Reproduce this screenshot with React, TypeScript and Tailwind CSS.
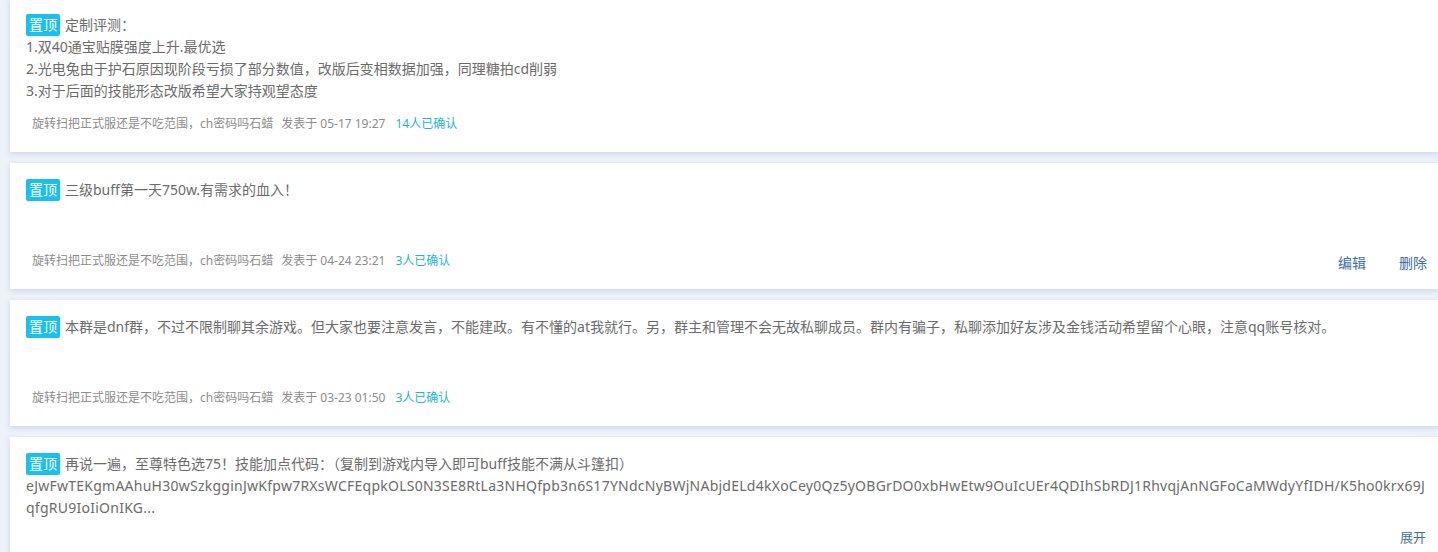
import { ReactNode } from 'react'

interface Notice {
  lines: ReactNode[]
  time: string
  confirmed: number
  canEdit?: boolean
  collapsed?: boolean
}

const author = '旋转扫把正式服还是不吃范围，ch密码吗石蜡'

const notices: Notice[] = [
  {
    lines: [
      '定制评测：',
      '1.双40通宝贴膜强度上升.最优选',
      '2.光电兔由于护石原因现阶段亏损了部分数值，改版后变相数据加强，同理糖拍cd削弱',
      '3.对于后面的技能形态改版希望大家持观望态度',
    ],
    time: '05-17 19:27',
    confirmed: 14,
  },
  {
    lines: ['三级buff第一天750w.有需求的血入！'],
    time: '04-24 23:21',
    confirmed: 3,
    canEdit: true,
  },
  {
    lines: [
      '本群是dnf群，不过不限制聊其余游戏。但大家也要注意发言，不能建政。有不懂的at我就行。另，群主和管理不会无故私聊成员。群内有骗子，私聊添加好友涉及金钱活动希望留个心眼，注意qq账号核对。',
    ],
    time: '03-23 01:50',
    confirmed: 3,
  },
  {
    lines: [
      '再说一遍，至尊特色选75！技能加点代码：（复制到游戏内导入即可buff技能不满从斗篷扣）',
      <span className="tracking-[0.25px]">
        eJwFwTEKgmAAhuH30wSzkgginJwKfpw7RXsWCFEqpkOLS0N3SE8RtLa3NHQfpb3n6S17YNdcNyBWjNAbjdELd4kXoCey0Qz5yOBGrDO0xbHwEtw9OuIcUEr4QDIhSbRDJ1RhvqjAnNGFoCaMWdyYfIDH/K5ho0krx69J
      </span>,
      <span className="tracking-[0.25px]">qfgRU9IoIiOnIKG...</span>,
    ],
    time: '',
    confirmed: 0,
    collapsed: true,
  },
]

function NoticeCard({ notice, first }: { notice: Notice; first?: boolean }) {
  return (
    <div
      className={`bg-white pl-4 pr-[10px] pt-4 pb-[18px] shadow-[0_2px_5px_rgba(170,185,215,0.45)] ${
        first ? '-mt-[2px]' : ''
      }`}
    >
      <div className="min-h-[60px] text-[14px] leading-[22px] text-[#6b6b6b] break-all">
        {notice.lines.map((line, i) => (
          <div key={i}>
            {i === 0 && (
              <span className="inline-block h-[22px] px-[3px] mr-[5px] rounded-[2px] bg-[#17c0ef] text-white align-top">
                置顶
              </span>
            )}
            {line}
          </div>
        ))}
      </div>

      {notice.collapsed ? (
        <div className="mt-[8px] flex justify-end text-[13px] leading-5 text-[#3d6f9f]">
          <span className="mr-[2px]">展开</span>
        </div>
      ) : (
        <div className="mt-[12px] flex items-center h-5">
          <div className="pl-[6px] text-[12px] leading-5 text-[#8c8c8c] flex">
            <span>{author}</span>
            <span className="ml-2">发表于 {notice.time}</span>
            <span className="ml-[10px] text-[#1cb4dc]">{notice.confirmed}人已确认</span>
          </div>
          {notice.canEdit && (
            <div className="ml-auto flex gap-[33px] text-[14px] leading-5 text-[#3d6f9f] pt-[3px] pr-[1px]">
              <span>编辑</span>
              <span>删除</span>
            </div>
          )}
        </div>
      )}
    </div>
  )
}

export default function App() {
  return (
    <div
      className="w-[1438px] h-[552px] overflow-hidden bg-[#edf1f8] pl-[10px]"
      style={{ fontFamily: '"Noto Sans", "Noto Sans CJK SC", sans-serif' }}
    >
      <div className="flex flex-col gap-[11px]">
        {notices.map((n, i) => (
          <NoticeCard key={i} notice={n} first={i === 0} />
        ))}
      </div>
    </div>
  )
}
